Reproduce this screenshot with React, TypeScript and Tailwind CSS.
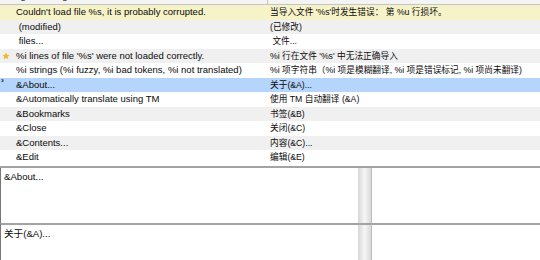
const rows = [
  { src: "Couldn't load file %s, it is probably corrupted.", tr: "当导入文件 '%s'时发生错误： 第 %u 行损坏。", bg: 'bg-[#f7f3c9]' },
  { src: ' (modified)', tr: '(已修改)', bg: 'bg-[#f0f0f0]' },
  { src: ' files...', tr: ' 文件...', bg: 'bg-white' },
  { src: "%i lines of file '%s' were not loaded correctly.", tr: "%i 行在文件 '%s' 中无法正确导入", bg: 'bg-[#f0f0f0]', mark: 'star' },
  { src: '%i strings (%i fuzzy, %i bad tokens, %i not translated)', tr: '%i 项字符串（%i 项是模糊翻译, %i 项是错误标记, %i 项尚未翻译)', bg: 'bg-white' },
  { src: '&About...', tr: '关于(&A)...', bg: 'bg-[#b5d5fc]', mark: 'tick' },
  { src: '&Automatically translate using TM', tr: '使用 TM 自动翻译 (&A)', bg: 'bg-white' },
  { src: '&Bookmarks', tr: '书签(&B)', bg: 'bg-[#f0f0f0]' },
  { src: '&Close', tr: '关闭(&C)', bg: 'bg-white' },
  { src: '&Contents...', tr: '内容(&C)...', bg: 'bg-[#f0f0f0]' },
  { src: '&Edit', tr: '编辑(&E)', bg: 'bg-white' },
];

function Star() {
  return (
    <svg width="8" height="8" viewBox="0 0 10 10" className="text-[#f2b632]">
      <path d="M5 0.5l1.3 3 3.2.3-2.4 2.1.7 3.2L5 7.4 2.2 9.1l.7-3.2L.5 3.8l3.2-.3z" fill="currentColor" />
    </svg>
  );
}

export default function App() {
  return (
    <div className="w-[540px] h-[260px] overflow-hidden bg-white text-[#0a0a0a] font-['Liberation_Sans','Noto_Sans_CJK_SC',sans-serif]">
      {/* String list */}
      <div className="h-[166px] overflow-hidden">
        <div className="-mt-[12px] h-[17px] grid grid-cols-[268px_1fr] border-b border-[#c4c4c4] bg-[#f4f4f4] text-[9.4px] leading-[16px]">
          <div className="px-[8px] border-r border-[#c4c4c4]">Original String</div>
          <div className="px-[4px]">Translation</div>
        </div>
        {rows.map((r, i) => (
          <div key={i} className={`${r.bg} h-[14.5px] grid grid-cols-[268px_1fr] items-center leading-[14px] whitespace-pre`}>
            <div className="relative pl-[16px] overflow-hidden text-[9.5px]">
              {r.mark === 'star' && (
                <span className="absolute left-[2px] top-[3px]"><Star /></span>
              )}
              {r.mark === 'tick' && (
                <span className="absolute left-[1px] -top-[3px] text-[8px] font-bold">³</span>
              )}
              {r.src}
            </div>
            <div className="pl-[2px] overflow-hidden text-[8.7px]">{r.tr}</div>
          </div>
        ))}
      </div>

      {/* Editor panes */}
      <div className="h-[94px] border-t-2 border-[#a3a3a3] grid grid-cols-[358px_14px_1fr] grid-rows-[55px_1fr] text-[9.6px]">
        <div className="border-l border-[#777] px-[3px] pt-[2px] leading-[14px]">&amp;About...</div>
        <div className="bg-gradient-to-r from-[#d6d6d6] via-[#f6f6f6] to-[#d9d9d9] border-r border-[#bdbdbd]" />
        <div />
        <div className="border-l border-[#777] border-t-2 border-t-[#a3a3a3] px-[3px] pt-[2px] leading-[14px]">关于(&amp;A)...</div>
        <div className="bg-gradient-to-r from-[#d6d6d6] via-[#f6f6f6] to-[#d9d9d9] border-r border-[#bdbdbd] border-t-2 border-t-[#a3a3a3]" />
        <div className="border-t-2 border-[#a3a3a3]" />
      </div>
    </div>
  );
}
